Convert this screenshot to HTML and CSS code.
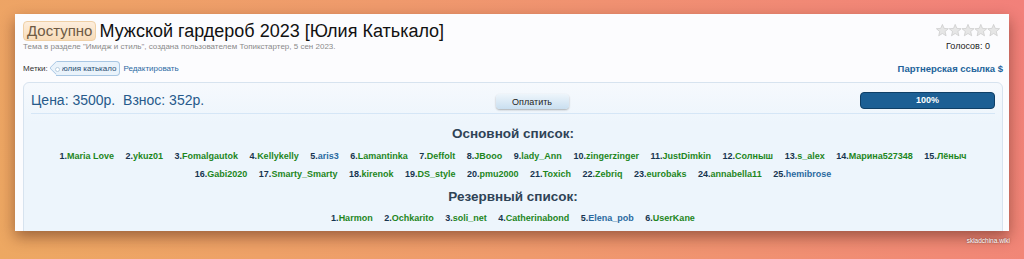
FILE: index.html
```html
<!DOCTYPE html>
<html>
<head>
<meta charset="utf-8">
<link rel="stylesheet" href="styles.css">
</head>
<body>
<div class="page">
  <div class="card">
    <div class="head">
      <div class="head-left">
        <h1 class="title"><span class="badge">Доступно</span>Мужской гардероб 2023 [Юлия Катькало]</h1>
        <div class="meta">Тема в разделе "Имидж и стиль", создана пользователем Топикстартер, 5 сен 2023.</div>
        <div class="tags">
          <span class="tags-label">Метки:</span>
          <span class="tag">юлия катькало</span>
          <a class="edit" href="#">Редактировать</a>
        </div>
      </div>
      <div class="head-right">
        <div class="rating">
          <svg class="stars" width="64" height="13" viewBox="0 0 64 13">
            <defs>
              <polygon id="st" points="6.4,0.4 8.1,4.4 12.4,4.7 9.1,7.5 10.1,11.8 6.4,9.5 2.7,11.8 3.7,7.5 0.4,4.7 4.7,4.4"/>
            </defs>
            <use href="#st" x="0"/>
            <use href="#st" x="12.8"/>
            <use href="#st" x="25.6"/>
            <use href="#st" x="38.4"/>
            <use href="#st" x="51.2"/>
          </svg>
          <div class="votes">Голосов: 0</div>
        </div>
        <a class="partner" href="#">Партнерская ссылка $</a>
      </div>
    </div>

    <div class="panel">
      <div class="panel-top">
        <div class="price">Цена: 3500р.&nbsp; Взнос: 352р.</div>
        <div class="pay-cell"><button class="pay">Оплатить</button></div>
        <div class="progress">100%</div>
      </div>

      <h2 class="list-title">Основной список:</h2>
      <div class="list">
        <span class="item"><b>1.</b><a class="g">Maria Love</a></span>
        <span class="item"><b>2.</b><a class="g">ykuz01</a></span>
        <span class="item"><b>3.</b><a class="g">Fomalgautok</a></span>
        <span class="item"><b>4.</b><a class="g">Kellykelly</a></span>
        <span class="item"><b>5.</b><a class="bl">aris3</a></span>
        <span class="item"><b>6.</b><a class="g">Lamantinka</a></span>
        <span class="item"><b>7.</b><a class="g">Deffolt</a></span>
        <span class="item"><b>8.</b><a class="g">JBooo</a></span>
        <span class="item"><b>9.</b><a class="g">lady_Ann</a></span>
        <span class="item"><b>10.</b><a class="g">zingerzinger</a></span>
        <span class="item"><b>11.</b><a class="g">JustDimkin</a></span>
        <span class="item"><b>12.</b><a class="g">Солныш</a></span>
        <span class="item"><b>13.</b><a class="g">s_alex</a></span>
        <span class="item"><b>14.</b><a class="g">Марина527348</a></span>
        <span class="item"><b>15.</b><a class="g">Лёныч</a></span>
        <span class="item"><b>16.</b><a class="g">Gabi2020</a></span>
        <span class="item"><b>17.</b><a class="g">Smarty_Smarty</a></span>
        <span class="item"><b>18.</b><a class="g">kirenok</a></span>
        <span class="item"><b>19.</b><a class="g">DS_style</a></span>
        <span class="item"><b>20.</b><a class="g">pmu2000</a></span>
        <span class="item"><b>21.</b><a class="g">Toxich</a></span>
        <span class="item"><b>22.</b><a class="g">Zebriq</a></span>
        <span class="item"><b>23.</b><a class="g">eurobaks</a></span>
        <span class="item"><b>24.</b><a class="g">annabella11</a></span>
        <span class="item"><b>25.</b><a class="bl">hemibrose</a></span>
      </div>

      <h2 class="list-title second">Резервный список:</h2>
      <div class="list reserve">
        <span class="item"><b>1.</b><a class="g">Harmon</a></span>
        <span class="item"><b>2.</b><a class="g">Ochkarito</a></span>
        <span class="item"><b>3.</b><a class="g">soli_net</a></span>
        <span class="item"><b>4.</b><a class="g">Catherinabond</a></span>
        <span class="item"><b>5.</b><a class="bl">Elena_pob</a></span>
        <span class="item"><b>6.</b><a class="g">UserKane</a></span>
      </div>
    </div>
  </div>
  <div class="wm">skladchina.wiki</div>
</div>
</body>
</html>
```

FILE: styles.css
```css
html, body {
    margin: 0;
    height: 100%;
}
body {
    background: linear-gradient(60deg, #eda862 0%, #ef9a6c 45%, #f2807a 100%);
    font-family: "Liberation Sans", Arial, sans-serif;
    overflow: hidden;
}
.page {
    padding: 14px 15px 0 15px;
}
.card {
    height: 217px;
    box-sizing: border-box;
    overflow: hidden;
    background: #fcfcfe;
    padding: 7px 6px 0 8px;
    box-shadow: 0 6px 14px rgba(60, 20, 10, 0.45);
}
.head {
    display: flex;
    justify-content: space-between;
}
.title {
    margin: 0;
    font-size: 18px;
    font-weight: normal;
    color: #111;
    line-height: 20px;
}
.badge {
    display: inline-block;
    margin-right: 3px;
    padding: 0 3px;
    border: 1px solid #efd0a6;
    border-radius: 4px;
    background: linear-gradient(#fdeedd, #f8dcb9);
    color: #6e5a44;
    font-size: 15px;
    line-height: 18px;
    vertical-align: top;
}
.meta {
    margin-top: 1px;
    font-size: 8px;
    color: #8a8a8a;
}
.tags {
    margin-top: 10px;
    display: flex;
    align-items: center;
    font-size: 8px;
}
.tags-label {
    color: #333;
}
.tag {
    position: relative;
    margin-left: 8px;
    height: 13px;
    line-height: 13px;
    padding: 0 3px 0 6px;
    background: #eaf3fb;
    border: 1px solid #a9c7e3;
    border-left: none;
    border-radius: 0 4px 4px 0;
    color: #2a4d70;
}
.tag::before {
    content: "";
    position: absolute;
    left: -5px;
    top: 1px;
    width: 9px;
    height: 9px;
    background: #eaf3fb;
    border-left: 1px solid #a9c7e3;
    border-bottom: 1px solid #a9c7e3;
    transform: rotate(45deg);
    border-radius: 0 0 0 2px;
}
.tag::after {
    content: "";
    position: absolute;
    left: -1px;
    top: 5px;
    width: 3px;
    height: 3px;
    border: 1px solid #b8cde0;
    border-radius: 50%;
    background: #fff;
}
.edit {
    margin-left: 3px;
    color: #2b6aa3;
    text-decoration: none;
}
.head-right {
    display: flex;
    flex-direction: column;
    align-items: flex-end;
}
.rating {
    margin-top: 2px;
    margin-right: 3px;
    text-align: center;
}
.stars use {
    fill: #e6e6e6;
    stroke: #c9c9c9;
    stroke-width: 0.7;
}
.votes {
    font-size: 9px;
    color: #222;
}
.partner {
    margin-top: 12px;
    font-size: 9.5px;
    font-weight: bold;
    color: #22639a;
    text-decoration: none;
}
.panel {
    margin-top: 6px;
    height: 200px;
    border: 1px solid #d7e3ef;
    border-radius: 6px;
    background: linear-gradient(#f6f9fd, #edf5fc 40px);
    padding: 0 7px;
}
.panel-top {
    display: flex;
    align-items: center;
    height: 26px;
    padding-top: 4px;
    border-bottom: 1px solid #d5e6f6;
}
.price {
    font-size: 14px;
    color: #275a8b;
}
.pay-cell {
    flex: 1;
    text-align: center;
}
.pay {
    width: 73px;
    height: 15px;
    padding: 0;
    border: none;
    border-radius: 4px;
    background: linear-gradient(#eef5fb, #c9dff0);
    box-shadow: 0 1px 2px rgba(0, 0, 0, 0.3);
    font-family: "Liberation Sans", Arial, sans-serif;
    font-size: 9px;
    color: #222;
}
.progress {
    width: 133px;
    height: 15px;
    line-height: 15px;
    border: 1px solid #0f3f66;
    border-radius: 4px;
    background: #1c5f94;
    color: #fff;
    font-size: 9px;
    font-weight: bold;
    text-align: center;
}
.list-title {
    margin: 12px 0 0 0;
    text-align: center;
    font-size: 13.5px;
    line-height: 16px;
    color: #2f4356;
}
.list-title.second {
    margin-top: 6px;
}
.list {
    margin-top: 5px;
    text-align: center;
    font-size: 9px;
    font-weight: bold;
    line-height: 18px;
    padding: 0 20px;
}
.list.reserve {
    margin-top: 4px;
}
.item {
    margin: 0 4.5px;
    white-space: nowrap;
}
.item b {
    color: #17344f;
}
.item a {
    cursor: pointer;
}
.g {
    color: #1d861d;
}
.bl {
    color: #2a6aa0;
}
.wm {
    margin-top: 6px;
    margin-right: -1px;
    text-align: right;
    font-size: 6.5px;
    color: #fff;
    text-shadow: 0 0 2px rgba(0, 0, 0, 0.6);
}
```
